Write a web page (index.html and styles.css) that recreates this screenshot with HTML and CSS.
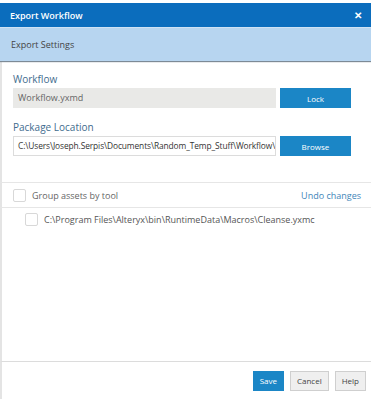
FILE: index.html
```html
<!DOCTYPE html>
<html lang="en">
<head>
  <meta charset="UTF-8" />
  <title>Export Workflow</title>
  <link rel="stylesheet" href="styles.css">
</head>
<body>
  <div class="dialog">
    <div class="titlebar">
      <span class="title">Export Workflow</span>
      <span class="close">&#x2715;</span>
    </div>
    <div class="subheader">Export Settings</div>
    <div class="content">
      <div class="field">
        <label class="label">Workflow</label>
        <div class="row">
          <div class="input readonly">Workflow.yxmd</div>
          <button class="btn primary wide">Lock</button>
        </div>
      </div>
      <div class="field">
        <label class="label">Package Location</label>
        <div class="row">
          <div class="input path">C:\Users\Joseph.Serpis\Documents\Random_Temp_Stuff\Workflow\</div>
          <button class="btn primary wide">Browse</button>
        </div>
      </div>
    </div>
    <div class="assets-head">
      <span class="check"></span>
      <span class="assets-label">Group assets by tool</span>
      <a class="undo">Undo changes</a>
    </div>
    <div class="assets">
      <div class="asset">
        <span class="check"></span>
        <span>C:\Program Files\Alteryx\bin\RuntimeData\Macros\Cleanse.yxmc</span>
      </div>
    </div>
    <div class="footer">
      <button class="btn primary">Save</button>
      <button class="btn">Cancel</button>
      <button class="btn">Help</button>
    </div>
  </div>
</body>
</html>
```

FILE: styles.css
```css
html, body {
  margin: 0;
  background: #fff;
}
body {
  font-family: "Open Sans", sans-serif;
  font-size: 9px;
  color: #444;
}
.dialog {
  width: 371px;
  height: 399px;
  display: flex;
  flex-direction: column;
  padding-top: 3px;
  box-sizing: border-box;
  background: #fff;
}
.titlebar {
  height: 24px;
  background: #0b6dbd;
  color: #fff;
  display: flex;
  align-items: center;
  justify-content: space-between;
  padding: 0 9px 0 10px;
}
.title {
  font-size: 9px;
  font-weight: 600;
}
.close {
  font-size: 10px;
  font-weight: 700;
}
.subheader {
  height: 33px;
  background: #b7d5f0;
  border-top: 1px solid #cfe2f4;
  box-shadow: 0 1px 1px #7d8a96;
  display: flex;
  align-items: center;
  padding-left: 11px;
  color: #444;
  font-size: 9px;
  position: relative;
}
.content {
  flex: 0 0 auto;
  border-left: 2px solid #e4e4e4;
  padding: 11px 20px 0 11px;
  height: 110px;
}
.field {
  margin-bottom: 12px;
}
.label {
  display: block;
  color: #3f6c8e;
  font-size: 10px;
  margin-bottom: 2px;
}
.row {
  display: flex;
  gap: 4px;
}
.input {
  width: 263px;
  height: 20px;
  box-sizing: border-box;
  border: 1px solid #dcdcdc;
  padding: 0 4px;
  line-height: 18px;
  white-space: nowrap;
  overflow: hidden;
  color: #333;
}
.input.path {
  font-size: 8.4px;
  letter-spacing: -0.1px;
}
.input.readonly {
  background: #e9e9e7;
  border-color: #e9e9e7;
  color: #666;
}
.btn {
  font-family: "Open Sans", sans-serif;
  font-size: 8px;
  height: 20px;
  border: 1px solid #cfcfcf;
  background: #efefef;
  color: #444;
  padding: 0 6px;
}
.btn.primary {
  background: #1b86c6;
  border-color: #1b86c6;
  color: #fff;
}
.btn.wide {
  width: 71px;
}
.assets-head {
  border-top: 1px solid #e6e6e6;
  border-bottom: 1px solid #e6e6e6;
  border-left: 2px solid #e4e4e4;
  height: 24px;
  display: flex;
  align-items: center;
  padding: 0 10px 0 11px;
  gap: 6px;
}
.assets-label {
  flex: 1;
  color: #666;
}
.undo {
  color: #3f86b9;
}
.check {
  width: 11px;
  height: 11px;
  border: 1px solid #d8d8d8;
  border-radius: 2px;
  background: #fff;
}
.assets {
  flex: 1;
  border-left: 2px solid #e4e4e4;
  padding: 5px 0 0 23px;
}
.asset {
  display: flex;
  align-items: center;
  gap: 6px;
  color: #555;
}
.footer {
  border-top: 1px solid #dcdcdc;
  border-left: 2px solid #e4e4e4;
  height: 37px;
  display: flex;
  align-items: center;
  justify-content: flex-end;
  gap: 6px;
  padding-right: 5px;
}
```
